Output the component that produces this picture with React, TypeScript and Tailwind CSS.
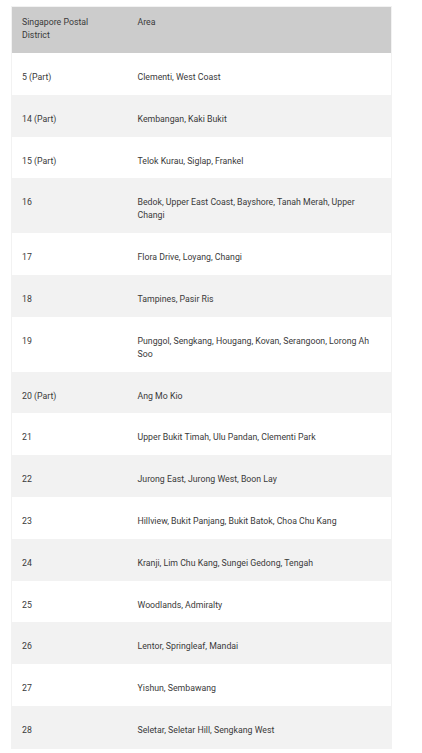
import React from "react";

const rows: [string, string][] = [
  ["5 (Part)", "Clementi, West Coast"],
  ["14 (Part)", "Kembangan, Kaki Bukit"],
  ["15 (Part)", "Telok Kurau, Siglap, Frankel"],
  ["16", "Bedok, Upper East Coast, Bayshore, Tanah Merah, Upper Changi"],
  ["17", "Flora Drive, Loyang, Changi"],
  ["18", "Tampines, Pasir Ris"],
  ["19", "Punggol, Sengkang, Hougang, Kovan, Serangoon, Lorong Ah Soo"],
  ["20 (Part)", "Ang Mo Kio"],
  ["21", "Upper Bukit Timah, Ulu Pandan, Clementi Park"],
  ["22", "Jurong East, Jurong West, Boon Lay"],
  ["23", "Hillview, Bukit Panjang, Bukit Batok, Choa Chu Kang"],
  ["24", "Kranji, Lim Chu Kang, Sungei Gedong, Tengah"],
  ["25", "Woodlands, Admiralty"],
  ["26", "Lentor, Springleaf, Mandai"],
  ["27", "Yishun, Sembawang"],
  ["28", "Seletar, Seletar Hill, Sengkang West"],
];

export default function App() {
  return (
    <div className="min-h-[753px] bg-white pt-[6px] pl-[11px] font-['Roboto',sans-serif] text-[8.75px] leading-[13px] text-[#3a3a3a]">
      <table className="w-[381px] border-collapse border border-[#f2f2f2] table-fixed">
        <colgroup>
          <col className="w-[116px]" />
          <col />
        </colgroup>
        <thead>
          <tr className="bg-[#cccccc]">
            <th className="border-0 pl-[10px] pr-[10px] pt-[9px] pb-[11px] text-left align-top font-normal">
              Singapore Postal District
            </th>
            <th className="border-0 pl-[10px] pr-[10px] pt-[9px] pb-[11px] text-left align-top font-normal">
              Area
            </th>
          </tr>
        </thead>
        <tbody>
          {rows.map(([d, a], i) => (
            <tr key={d} className={i % 2 === 0 ? "bg-white" : "bg-[#f2f2f2]"}>
              <td className="pl-[10px] pr-[10px] pt-[18px] pb-[10.8px] align-top">{d}</td>
              <td className="pl-[10px] pr-[14px] pt-[18px] pb-[10.8px] align-top">{a}</td>
            </tr>
          ))}
        </tbody>
      </table>
    </div>
  );
}
